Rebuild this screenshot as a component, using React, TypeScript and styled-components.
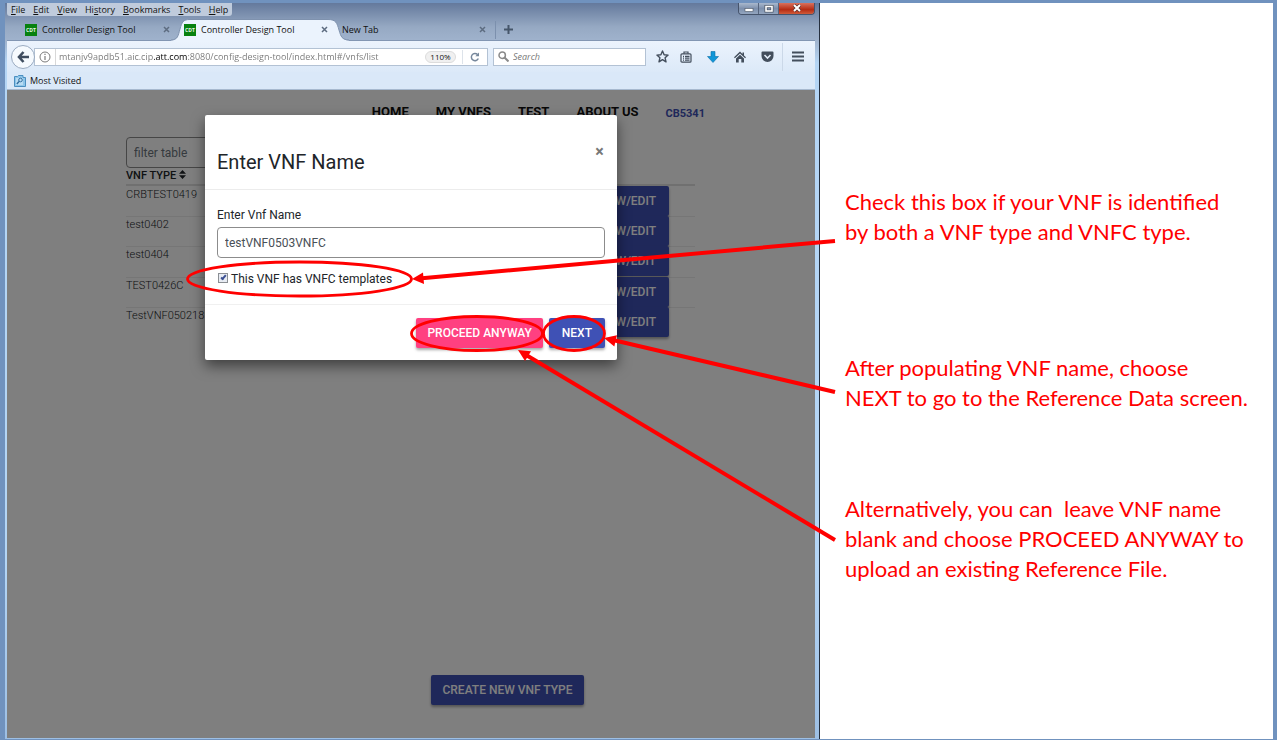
import React from "react";
import styled, { createGlobalStyle } from "styled-components";

const chromeFont = `"Open Sans", "Noto Sans", sans-serif`;
const appFont = `Roboto, "Liberation Sans", sans-serif`;

const GlobalStyle = createGlobalStyle`
  *, *::before, *::after { box-sizing: border-box; }
  body { margin: 0; background: #7092be; }
  button, input { font: inherit; margin: 0; }
  button { border: 0; padding: 0; background: none; color: inherit; }
`;

const Slide = styled.main`
  position: relative;
  display: grid;
  grid-template-columns: minmax(0, 815fr) minmax(0, 453fr);
  min-height: 100vh;
  border: solid #7092be;
  border-width: 3px 4px 1px 5px;
  background: #fff;
`;

/* ---------- browser window ---------- */

const BrowserWindow = styled.section`
  display: flex;
  flex-direction: column;
  padding: 0 4px 1px 2px;
  border-right: 1px solid #26303f;
  background: linear-gradient(#64799c 0, #96a9c3 24px, #9fb2cc 37px, #b4d5f5 60px, #b4d5f5 560px, #9dbfe4 100%);
  font-family: ${chromeFont};
  font-size: 9px;
  line-height: 12px;
  color: #111;
`;

const TitleBar = styled.header`
  display: flex;
  justify-content: space-between;
  align-items: flex-start;
  height: 13px;
`;

const MenuBar = styled.nav`
  display: flex;
  gap: 8px;
  height: 13px;
  padding: 0 4px;
  border-radius: 0 0 3px 3px;
  background: #bfcbdc;
  line-height: 11px;
`;

const MenuItem = styled.button`
  line-height: 11px;
`;

const WindowControls = styled.div`
  display: flex;
  height: 12px;
  border: solid #46546c;
  border-width: 0 1px 1px;
  border-radius: 0 0 4px 4px;
  overflow: hidden;
`;

const WindowButton = styled.button<{ $close?: boolean }>`
  display: grid;
  place-items: center;
  width: ${(p) => (p.$close ? 35 : 20)}px;
  border-right: ${(p) => (p.$close ? 0 : 1)}px solid #56657e;
  background: ${(p) =>
    p.$close ? "linear-gradient(#d9715d, #b52c14 60%, #d05b3a)" : "linear-gradient(#a9b8cd, #7d90ad 50%, #93a5bf)"};
`;

const TabStrip = styled.div`
  display: flex;
  align-items: stretch;
  height: 25px;
  padding-top: 3px;
  border-bottom: 1px solid #8296b3;
`;

const Tab = styled.div<{ $width: number; $start: number }>`
  position: relative;
  display: flex;
  align-items: center;
  flex: 0 0 ${(p) => p.$width}px;
  padding: 0 5px 0 ${(p) => p.$start}px;
`;

const TabShape = styled.svg`
  position: absolute;
  left: -6px;
  top: 0;
  width: 178px;
  height: 22px;
`;

const TabLabel = styled.button`
  position: relative;
  display: flex;
  align-items: center;
  gap: 5px;
  flex: 1;
  text-align: left;
  white-space: nowrap;
`;

const Favicon = styled.span`
  display: grid;
  place-items: center;
  width: 12px;
  height: 12px;
  background: #07810f;
  color: #e8f6e8;
  font-size: 5px;
  font-weight: 700;
  line-height: 12px;
`;

const IconButton = styled.button<{ $width?: number }>`
  position: relative;
  display: grid;
  place-items: center;
  flex: none;
  width: ${(p) => p.$width ?? 12}px;
  height: 18px;
`;

const NewTab = styled(IconButton)`
  align-self: center;
  margin-left: 2px;
  border-left: 1px solid #7c90ad;
`;

const Toolbar = styled.div`
  display: flex;
  align-items: center;
  height: 31px;
  padding: 0 2px 0 4px;
  background: linear-gradient(#ebf3fd, #dce9f8);
`;

const BackButton = styled.button`
  display: grid;
  place-items: center;
  position: relative;
  flex: none;
  width: 24px;
  height: 24px;
  border: 1px solid #9aabc1;
  border-radius: 50%;
  background: #f6fafe;
`;

const AddressBar = styled.div`
  display: flex;
  align-items: center;
  flex: 1;
  height: 18px;
  margin-left: -1px;
  padding-left: 4px;
  border: 1px solid #b3c2d4;
  background: #fff;
`;

const AddressInput = styled.input`
  flex: 1;
  min-width: 0;
  height: 16px;
  margin-left: 4px;
  padding: 0 0 0 3px;
  border: 0;
  border-left: 1px solid #d8d8d8;
  outline: 0;
  background: linear-gradient(to right, #777 98px, #000 98px, #000 131px, #777 131px);
  background-clip: text;
  -webkit-text-fill-color: transparent;
`;

const Zoom = styled.button`
  width: 31px;
  height: 12px;
  margin-right: 6px;
  border: 1px solid #dcdcdc;
  border-radius: 6px;
  background: #f0f0f0;
  font-size: 8px;
  line-height: 10px;
`;

const Reload = styled(IconButton)`
  border-left: 1px solid #dde3ea;
  height: 14px;
`;

const SearchBox = styled.label`
  display: flex;
  align-items: center;
  gap: 4px;
  flex: 0 0 153px;
  height: 18px;
  margin: 0 4px 0 5px;
  padding-left: 4px;
  border: 1px solid #b3c2d4;
  background: #fff;
`;

const SearchInput = styled.input`
  flex: 1;
  min-width: 0;
  padding: 0;
  border: 0;
  outline: 0;
  font-style: italic;
  &::placeholder { color: #777; opacity: 1; }
`;

const MenuButton = styled(IconButton)`
  height: 28px;
  border-left: 1px solid #cbd8e8;
`;

const BookmarksBar = styled.div`
  display: flex;
  align-items: center;
  height: 18px;
  padding-left: 7px;
  border-bottom: 1px solid #a7b9cf;
  background: #dae8f8;
`;

const Bookmark = styled.button`
  display: flex;
  align-items: center;
  gap: 4px;
`;

/* ---------- page inside the browser ---------- */

const Viewport = styled.div`
  position: relative;
  display: flex;
  flex-direction: column;
  flex: 1;
  background: #fff;
  color: #212529;
  font-family: ${appFont};
  font-size: 12px;
  line-height: 16px;
`;

const SiteNav = styled.nav`
  display: flex;
  justify-content: flex-end;
  align-items: center;
  gap: 27px;
  height: 44px;
  padding-right: 110px;
`;

const NavLink = styled.a<{ $user?: boolean }>`
  color: ${(p) => (p.$user ? "#3f51b5" : "#111")};
  font-size: ${(p) => (p.$user ? 11 : 13)}px;
  font-weight: 700;
  text-decoration: none;
  padding-top: ${(p) => (p.$user ? 3 : 0)}px;
`;

const Content = styled.div`
  padding: 3px 120px 0 119px;
`;

const TextField = styled.input`
  display: block;
  width: 100%;
  height: 31px;
  padding: 0 7px;
  border: 1px solid #8c8c8c;
  border-radius: 4px;
  outline: 0;
  background: #fff;
  color: #495057;
  &::placeholder { color: #6c757d; opacity: 1; }
`;

const FilterField = styled(TextField)`
  width: 190px;
`;

const VnfTable = styled.table`
  width: 100%;
  border-collapse: collapse;
  th { height: 17px; padding: 0; text-align: left; vertical-align: top; font-weight: 500; font-size: 11px; line-height: 16px; border-bottom: 2px solid #e0e0e0; }
  td { height: 30px; padding: 0; vertical-align: top; font-size: 11px; font-weight: 300; line-height: 17px; }
  tr:not(:last-child) td { box-shadow: 0 1px #ececec; }
  tr:nth-child(odd) td { height: 31px; }
  td:last-child { width: 122px; padding-right: 26px; }
`;

const RaisedButton = styled.button<{ $tone?: "accent" }>`
  height: 30px;
  padding: 0 ${(p) => (p.type === "submit" ? 13 : 11)}px;
  border-radius: 2px;
  background: ${(p) => (p.$tone ? "#ff4081" : "#3f51b5")};
  color: #fff;
  font-family: ${appFont};
  font-size: 12px;
  font-weight: 500;
  line-height: 30px;
  white-space: nowrap;
  box-shadow: 0 2px 3px rgba(0, 0, 0, 0.35);
`;

const RowButton = styled(RaisedButton)`
  display: block;
  width: 100%;
  padding-right: 13px;
  text-align: right;
`;

const PageFooter = styled.footer`
  display: flex;
  justify-content: center;
  margin-top: auto;
  padding: 0 0 33px 193px;
`;

const Backdrop = styled.div`
  position: absolute;
  inset: 0;
  display: flex;
  justify-content: center;
  align-items: flex-start;
  padding-top: 25px;
  background: rgba(0, 0, 0, 0.5);
`;

const Dialog = styled.form`
  width: 412px;
  border-radius: 2px;
  background: #fff;
  box-shadow: 0 6px 14px rgba(0, 0, 0, 0.5);
`;

const DialogHeader = styled.div`
  display: flex;
  justify-content: space-between;
  align-items: flex-start;
  height: 75px;
  padding: 27px 12px 0;
  border-bottom: 1px solid #ececec;
`;

const DialogTitle = styled.h2`
  margin: 8px 0 0;
  font-size: 20px;
  font-weight: 400;
  line-height: 24px;
`;

const CloseButton = styled.button`
  width: 11px;
  height: 20px;
  color: #777;
  font-size: 16px;
  font-weight: 700;
  line-height: 20px;
`;

const DialogBody = styled.div`
  height: 115px;
  padding: 17px 12px 0;
  border-bottom: 1px solid #f0f0f0;
`;

const FieldLabel = styled.label`
  display: block;
  margin-bottom: 4px;
`;

const CheckLabel = styled.label`
  display: flex;
  align-items: center;
  gap: 3px;
  margin: 13px 0 0 1px;
`;

const Checkbox = styled.input`
  position: relative;
  appearance: none;
  width: 10px;
  height: 10px;
  border: 1px solid #8b8f94;
  background: #e8ecf3;
  margin-bottom: 3px;
  &:checked::after {
    content: "";
    position: absolute;
    left: 3px;
    top: 0;
    width: 3px;
    height: 6px;
    border: solid #3b4f92;
    border-width: 0 2px 2px 0;
    transform: rotate(40deg);
  }
`;

const DialogActions = styled.div`
  display: flex;
  justify-content: flex-end;
  gap: 6px;
  padding: 13px 12px 12px;
`;

/* ---------- notes and call-outs ---------- */

const Notes = styled.aside`
  padding: 184px 8px 0 25px;
  color: #f00;
  font-family: Lato, Carlito, sans-serif;
  font-size: 22px;
  line-height: 30px;
`;

const Note = styled.p<{ $gap: number }>`
  margin: 0 0 ${(p) => p.$gap}px;
  white-space: pre;
`;

const Callouts = styled.svg`
  position: absolute;
  left: -5px;
  top: -3px;
  width: calc(100% + 9px);
  height: 740px;
  pointer-events: none;
`;

const menus = [
  ["", "F", "ile"],
  ["", "E", "dit"],
  ["", "V", "iew"],
  ["Hi", "s", "tory"],
  ["", "B", "ookmarks"],
  ["", "T", "ools"],
  ["", "H", "elp"],
];

const vnfTypes = ["CRBTEST0419", "test0402", "test0404", "TEST0426C", "TestVNF050218"];

const notes = [
  { gap: 106, text: "Check this box if your VNF is identified\nby both a VNF type and VNFC type." },
  { gap: 81, text: "After populating VNF name, choose\nNEXT to go to the Reference Data screen." },
  { gap: 0, text: "Alternatively, you can  leave VNF name\nblank and choose PROCEED ANYWAY to\nupload an existing Reference File." },
];

const Cross = () => (
  <svg width="7" height="7" viewBox="0 0 7 7" stroke="#5d6c80" strokeWidth="1.5">
    <path d="M1 1l5 5M6 1l-5 5" />
  </svg>
);

interface BrowserTabProps {
  title: string;
  width: number;
  start: number;
  active?: boolean;
  icon?: boolean;
}

const BrowserTab = ({ title, width, start, active, icon }: BrowserTabProps) => (
  <Tab $width={width} $start={start}>
    {active && (
      <TabShape viewBox="0 0 178 22" aria-hidden>
        <path d="M0 21.5C7 21 7 17 9 10C11 3 12 .5 19 .5H157C165 .5 166 4 168 11C170 18 171 21 178 21.5V22H0Z" fill="#ebf3fd" />
        <path d="M0 21C7 20.5 7 17 9 10C11 3 12 .5 19 .5H157C165 .5 166 4 168 11C170 18 171 20.5 178 21" fill="none" stroke="#7f92ae" />
      </TabShape>
    )}
    <TabLabel type="button">
      {icon && <Favicon>CDT</Favicon>}
      {title}
    </TabLabel>
    <IconButton type="button" aria-label="Close tab"><Cross /></IconButton>
  </Tab>
);

export default function App() {
  return (
    <>
      <GlobalStyle />
      <Slide>
        <BrowserWindow>
          <TitleBar>
            <MenuBar>
              {menus.map(([a, key, b]) => (
                <MenuItem key={a + key + b} type="button">{a}<u>{key}</u>{b}</MenuItem>
              ))}
            </MenuBar>
            <WindowControls>
              <WindowButton type="button" aria-label="Minimize">
                <svg width="10" height="8"><rect x="1" y="3.5" width="8" height="3" fill="#fff" stroke="#4c5563" strokeWidth=".6" /></svg>
              </WindowButton>
              <WindowButton type="button" aria-label="Maximize">
                <svg width="10" height="8"><rect x="2" y="1.5" width="6" height="4.5" fill="none" stroke="#4c5563" strokeWidth="3" /><rect x="2" y="1.5" width="6" height="4.5" fill="none" stroke="#fff" strokeWidth="1.6" /></svg>
              </WindowButton>
              <WindowButton type="button" aria-label="Close" $close>
                <svg width="10" height="9"><path d="M2 1l6 6M8 1l-6 6" stroke="#5b3030" strokeWidth="3.4" /><path d="M2 1l6 6M8 1l-6 6" stroke="#fff" strokeWidth="2" /></svg>
              </WindowButton>
            </WindowControls>
          </TitleBar>
          <TabStrip>
            <BrowserTab title="Controller Design Tool" width={170} start={18} icon />
            <BrowserTab title="Controller Design Tool" width={158} start={7} active icon />
            <BrowserTab title="New Tab" width={158} start={7} />
            <NewTab type="button" aria-label="New tab" $width={26}>
              <svg width="9" height="9" stroke="#46566a" strokeWidth="2"><path d="M4.5 0v9M0 4.5h9" /></svg>
            </NewTab>
          </TabStrip>
          <Toolbar>
            <BackButton type="button" aria-label="Back">
              <svg width="12" height="12" viewBox="0 0 12 12" fill="none" stroke="#3f4d5f" strokeWidth="2.6"><path d="M6.5 1L2 6l4.500 5M2 6h10" /></svg>
            </BackButton>
            <AddressBar>
              <svg width="12" height="12" viewBox="0 0 12 12" fill="none" stroke="#7b7b7b"><circle cx="6" cy="6" r="5" /><path d="M6 5v4M6 2.8v1.2" strokeWidth="1.2" /></svg>
              <AddressInput aria-label="Address" defaultValue="mtanjv9apdb51.aic.cip.att.com:8080/config-design-tool/index.html#/vnfs/list" />
              <Zoom type="button">110%</Zoom>
              <Reload type="button" aria-label="Reload" $width={25}>
                <svg width="10" height="10" viewBox="0 0 10 10" fill="none" stroke="#76879b" strokeWidth="1.5"><path d="M8.3 6.5A3.6 3.6 0 1 1 7.5 2.5" /><path d="M9 .5V4.2H5.3Z" fill="#76879b" stroke="none" /></svg>
              </Reload>
            </AddressBar>
            <SearchBox>
              <svg width="11" height="11" viewBox="0 0 11 11" fill="none" stroke="#8a8a8a" strokeWidth="1.5"><circle cx="4.2" cy="4.2" r="3.2" /><path d="M6.5 6.5l4 4" strokeWidth="2" /></svg>
              <SearchInput aria-label="Search" placeholder="Search" />
            </SearchBox>
            <IconButton type="button" aria-label="Bookmark this page" $width={24}>
              <svg width="13" height="13" viewBox="0 0 13 13" fill="none" stroke="#434e5c" strokeWidth="1.4" strokeLinejoin="round"><path d="M6.5 1l1.6 3.7 4 .4-3 2.7.9 4-3.5-2.1L3 11.8l.9-4-3-2.7 4-.4Z" /></svg>
            </IconButton>
            <IconButton type="button" aria-label="Bookmarks list" $width={24}>
              <svg width="12" height="12" viewBox="0 0 12 12" fill="none" stroke="#434e5c" strokeWidth="1.2"><rect x="1" y="2.8" width="10" height="8.4" rx="1" /><path d="M4 2.8V1h4v1.8M3 5.3h1M5 5.3h4.5M3 7.2h1M5 7.2h4.5M3 9.1h1M5 9.1h4.5" /></svg>
            </IconButton>
            <IconButton type="button" aria-label="Downloads" $width={29}>
              <svg width="12" height="12" viewBox="0 0 12 12"><path d="M4 .5h4V5.5h3.5L6 11.5.5 5.5H4Z" fill="#0f96d8" stroke="#0b6fa8" strokeWidth=".6" /></svg>
            </IconButton>
            <IconButton type="button" aria-label="Home" $width={26}>
              <svg width="12" height="12" viewBox="0 0 12 12" fill="#434e5c"><path d="M6 .5L0 6.3l.9.9L6 2.5l5.1 4.7.9-.9-2-1.9V1.5H8.5v1.4Z" /><path d="M2 7.4L6 3.7l4 3.7V11.5H7.3V8H4.7v3.5H2Z" /></svg>
            </IconButton>
            <IconButton type="button" aria-label="Pocket" $width={29}>
              <svg width="13" height="12" viewBox="0 0 13 12"><path d="M1.5.5h10q1 0 1 1V5a6 6 0 0 1-12 0V1.5q0-1 1-1Z" fill="#434e5c" /><path d="M3.5 4l3 3 3-3" fill="none" stroke="#e3edf9" strokeWidth="1.6" /></svg>
            </IconButton>
            <MenuButton type="button" aria-label="Open menu" $width={31}>
              <svg width="12" height="11" stroke="#434e5c" strokeWidth="2"><path d="M0 1.5h12M0 5.5h12M0 9.5h12" /></svg>
            </MenuButton>
          </Toolbar>
          <BookmarksBar>
            <Bookmark type="button">
              <svg width="12" height="12" viewBox="0 0 12 12" fill="none"><path d="M.5 1.5h3l1-1h4.5v2h2.5v9H.5Z" fill="#8fc6ea" stroke="#4b8fc0" /><rect x="2" y="3" width="7" height="7" fill="#b9dcf3" /><circle cx="6.5" cy="5" r="1.8" stroke="#2f6c9e" /><path d="M5 6.5L2.8 9" stroke="#2f6c9e" strokeWidth="1.3" /></svg>
              Most Visited
            </Bookmark>
          </BookmarksBar>

          <Viewport>
            <SiteNav>
              <NavLink href="#home">HOME</NavLink>
              <NavLink href="#vnfs">MY VNFS</NavLink>
              <NavLink href="#test">TEST</NavLink>
              <NavLink href="#about">ABOUT US</NavLink>
              <NavLink href="#user" $user>CB5341</NavLink>
            </SiteNav>
            <Content>
              <FilterField aria-label="Filter table" placeholder="filter table" />
              <VnfTable>
                <thead>
                  <tr>
                    <th colSpan={2}>
                      VNF TYPE{" "}
                      <svg width="7" height="9" viewBox="0 0 7 9" fill="#212529"><path d="M3.5 0L7 3.8H0ZM3.5 9L0 5.2h7Z" /></svg>
                    </th>
                  </tr>
                </thead>
                <tbody>
                  {vnfTypes.map((name) => (
                    <tr key={name}>
                      <td>{name}</td>
                      <td><RowButton type="button">VIEW/EDIT</RowButton></td>
                    </tr>
                  ))}
                </tbody>
              </VnfTable>
            </Content>
            <PageFooter>
              <RaisedButton type="button">CREATE NEW VNF TYPE</RaisedButton>
            </PageFooter>

            <Backdrop>
              <Dialog role="dialog" aria-labelledby="dialog-title" onSubmit={(e) => e.preventDefault()}>
                <DialogHeader>
                  <DialogTitle id="dialog-title">Enter VNF Name</DialogTitle>
                  <CloseButton type="button" aria-label="Close dialog">×</CloseButton>
                </DialogHeader>
                <DialogBody>
                  <FieldLabel htmlFor="vnf-name">Enter Vnf Name</FieldLabel>
                  <TextField id="vnf-name" defaultValue="testVNF0503VNFC" />
                  <CheckLabel>
                    <Checkbox type="checkbox" defaultChecked />
                    This VNF has VNFC templates
                  </CheckLabel>
                </DialogBody>
                <DialogActions>
                  <RaisedButton type="button" $tone="accent">PROCEED ANYWAY</RaisedButton>
                  <RaisedButton type="submit">NEXT</RaisedButton>
                </DialogActions>
              </Dialog>
            </Backdrop>
          </Viewport>
        </BrowserWindow>

        <Notes>
          {notes.map((n) => (
            <Note key={n.text} $gap={n.gap}>{n.text}</Note>
          ))}
        </Notes>

        <Callouts viewBox="0 0 1277 740" preserveAspectRatio="none" aria-hidden>
          <g fill="none" stroke="#f00" strokeWidth="2.8">
            <ellipse cx="299.5" cy="279" rx="112" ry="17" />
            <ellipse cx="477" cy="333.5" rx="65.5" ry="17" />
            <ellipse cx="574" cy="333.5" rx="30.5" ry="17" />
          </g>
          <g stroke="#f00" strokeWidth="4">
            <path d="M835 241L422 278.2" />
            <path d="M835 392L614 340.3" />
            <path d="M835 540L527 355.5" />
          </g>
          <g fill="#f00">
            <path d="M412 279l11-6.5 1 11.5Z" />
            <path d="M604 338l13-2.7-2.7 11.2Z" />
            <path d="M518 350l13 1.3-6 9.7Z" />
          </g>
        </Callouts>
      </Slide>
    </>
  );
}
